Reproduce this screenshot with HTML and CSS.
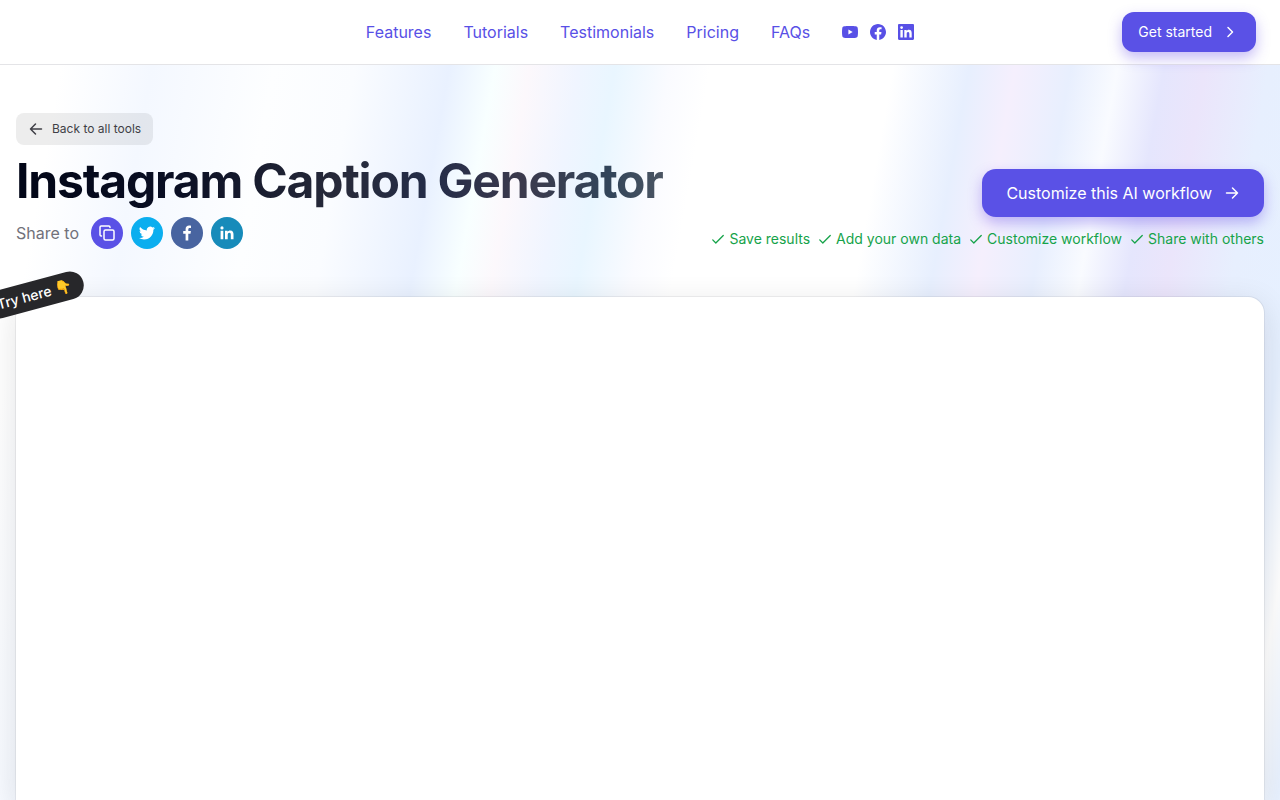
FILE: index.html
```
<!DOCTYPE html>
<html lang="en">
<head>
  <meta charset="utf-8">
  <meta name="viewport" content="width=device-width, initial-scale=1">
  <title>Instagram Caption Generator</title>
  <link rel="stylesheet" href="styles.css">
</head>
<body>

<header class="navbar">
  <nav class="nav-links">
    <a href="#features">Features</a>
    <a href="#tutorials">Tutorials</a>
    <a href="#testimonials">Testimonials</a>
    <a href="#pricing">Pricing</a>
    <a href="#faqs">FAQs</a>
    <div class="socials">
      <a href="#youtube" aria-label="YouTube">
        <svg viewBox="0 0 16 16" fill="currentColor"><path fill-rule="evenodd" d="M8 2c2.500 0 4.700.1 5.900.3.900.1 1.600.8 1.800 1.700.4 2.400.4 5.600 0 8-.2.900-.9 1.600-1.800 1.700-2.300.4-9.500.4-11.800 0C1.200 13.600.5 12.900.3 12c-.4-2.400-.4-5.600 0-8 .2-.9.900-1.600 1.800-1.700C3.300 2.100 5.500 2 8 2zM6.400 5.500v5L10.700 8z"/></svg>
      </a>
      <a href="#facebook" aria-label="Facebook">
        <svg viewBox="0 0 16 16" fill="currentColor"><path d="M16 8.050C16 3.600 12.400 0 8 0S0 3.600 0 8.050c0 4.020 2.930 7.350 6.750 7.950v-5.620H4.720V8.050h2.030V6.280c0-2.020 1.200-3.130 3.020-3.130.88 0 1.800.16 1.800.16v1.980h-1.010c-1 0-1.310.62-1.310 1.260v1.500h2.220l-.35 2.330H9.250V16C13.070 15.400 16 12.070 16 8.050z"/></svg>
      </a>
      <a href="#linkedin" aria-label="LinkedIn">
        <svg viewBox="0 0 16 16" fill="currentColor"><path fill-rule="evenodd" d="M1.150 0h13.700C15.490 0 16 .5 16 1.130v13.740c0 .63-.51 1.130-1.150 1.130H1.150C.51 16 0 15.500 0 14.870V1.130C0 .5.51 0 1.150 0zM2.400 6v7.600h2.400V6zM3.600 2.200a1.400 1.400 0 1 0 0 2.800 1.400 1.400 0 0 0 0-2.800zM6.300 6v7.600h2.400V9.850c0-1 .2-1.950 1.400-1.950s1.250 1.120 1.250 2.010v3.690h2.350V9.420c0-2.040-.44-3.610-2.820-3.610-1.150 0-1.910.63-2.230 1.220h-.03V6z"/></svg>
      </a>
    </div>
  </nav>
  <a class="btn btn-small" href="#start">
    Get started
    <svg viewBox="0 0 16 16" class="line-icon"><path d="M6 3.500 10.500 8 6 12.500"/></svg>
  </a>
</header>

<main class="page">
  <section class="hero">
    <div class="intro">
      <a class="back" href="#tools">
        <svg viewBox="0 0 16 16" class="line-icon"><path d="M13.500 8h-11M7.500 3 2.500 8l5 5"/></svg>
        Back to all tools
      </a>
      <h1>Instagram Caption Generator</h1>
      <div class="share">
        <span>Share to</span>
        <button class="share-btn copy" aria-label="Copy link">
          <svg viewBox="0 0 16 16" class="line-icon"><rect x="5" y="5" width="10" height="10" rx="1.500"/><path d="M11 2.500V2.200A1.200 1.200 0 0 0 9.800 1H2.200A1.200 1.200 0 0 0 1 2.200v7.600A1.200 1.200 0 0 0 2.200 11h.3"/></svg>
        </button>
        <button class="share-btn twitter" aria-label="Share on Twitter">
          <svg viewBox="0 0 24 24" fill="currentColor"><path d="M23.950 4.570a10 10 0 0 1-2.820.77 4.960 4.960 0 0 0 2.160-2.720c-.95.55-2 .95-3.130 1.180a4.920 4.920 0 0 0-8.380 4.480C7.690 8.100 4.070 6.130 1.640 3.160a4.920 4.920 0 0 0 1.520 6.570 4.900 4.900 0 0 1-2.230-.61v.06a4.920 4.920 0 0 0 3.950 4.830 5 5 0 0 1-2.210.08 4.940 4.940 0 0 0 4.600 3.420A9.870 9.870 0 0 1 0 19.540a14 14 0 0 0 7.550 2.210c9.050 0 14-7.500 14-13.980 0-.21 0-.42-.02-.63a9.900 9.900 0 0 0 2.460-2.550z"/></svg>
        </button>
        <button class="share-btn facebook" aria-label="Share on Facebook">
          <svg viewBox="0 0 16 16" fill="currentColor"><path d="M9.300 15.500V8.700h2.200l.4-2.600H9.300V4.500c0-.8.400-1.400 1.500-1.400H12V.8C11.600.700 10.900.600 10.100.600 8 .6 6.600 1.900 6.600 4.100v2H4.200v2.600h2.400v6.800z"/></svg>
        </button>
        <button class="share-btn linkedin" aria-label="Share on LinkedIn">
          <svg viewBox="0 0 16 16" fill="currentColor"><circle cx="3" cy="2.900" r="1.600"/><path d="M1.600 5.700h2.700v8.500H1.600zM6 5.700h2.600v1.200c.4-.8 1.300-1.400 2.600-1.400 2.700 0 3.300 1.700 3.300 4.100v4.600h-2.700v-4.100c0-1 0-2.300-1.400-2.300s-1.700 1.100-1.700 2.200v4.200H6z"/></svg>
        </button>
      </div>
    </div>

    <div class="actions">
      <a class="btn btn-large" href="#customize">
        Customize this AI workflow
        <svg viewBox="0 0 16 16" class="line-icon"><path d="M2.500 8h11M8.500 3l5 5-5 5"/></svg>
      </a>
      <ul class="perks">
        <li><svg viewBox="0 0 16 16" class="line-icon"><path d="m2 9 3.500 3.500L14 4"/></svg>Save results</li>
        <li><svg viewBox="0 0 16 16" class="line-icon"><path d="m2 9 3.500 3.500L14 4"/></svg>Add your own data</li>
        <li><svg viewBox="0 0 16 16" class="line-icon"><path d="m2 9 3.500 3.500L14 4"/></svg>Customize workflow</li>
        <li><svg viewBox="0 0 16 16" class="line-icon"><path d="m2 9 3.500 3.500L14 4"/></svg>Share with others</li>
      </ul>
    </div>
  </section>

  <section class="tool">
    <div class="try">Try here 👇</div>
  </section>
</main>

</body>
</html>
```

FILE: styles.css
```
* { box-sizing: border-box; }

body {
  display: flex;
  flex-direction: column;
  min-height: 100vh;
  margin: 0;
  font-family: Inter, "Noto Sans", sans-serif;
  font-size: 16px;
  line-height: 24px;
  color: #27272a;
  background: #fff;
  overflow-x: hidden;
}

a { color: inherit; text-decoration: none; }
svg { display: block; width: 16px; height: 16px; flex: none; }

.line-icon {
  fill: none;
  stroke: currentColor;
  stroke-width: 1.5;
  stroke-linecap: round;
  stroke-linejoin: round;
}

/* top bar */
.navbar {
  position: relative;
  z-index: 1;
  display: grid;
  grid-template-columns: 1fr auto 1fr;
  align-items: center;
  height: 65px;
  padding: 0 24px;
  border-bottom: 1px solid #e4e4e7;
}
.nav-links {
  grid-column: 2;
  display: flex;
  align-items: center;
  gap: 32px;
  color: #5850e6;
}
.socials { display: flex; gap: 12px; }

.btn {
  display: flex;
  align-items: center;
  justify-self: end;
  color: #fff;
  background: #5a51e6;
  border-radius: 12px;
  box-shadow: 0 6px 14px rgba(90, 60, 230, 0.35);
}
.btn-small { height: 40px; padding: 0 18px 0 16px; gap: 10px; font-size: 14px; }
.btn-large { height: 48px; padding: 0 24px; gap: 12px; border-radius: 14px; }

/* slanted pastel streaks behind the hero */
.page {
  flex: 1;
  display: flex;
  flex-direction: column;
  padding: 48px 16px 0;
  background: repeating-linear-gradient(100deg,
    #fff 0, #fff 60px, #f4f8ff 150px, #fdfeff 270px, #fafcff 350px,
    #e9f1ff 443px, #f8ffff 488px, #fcf8fc 522px, #f0f5ff 570px,
    #e9f6ff 606px, #fafbff 660px, #fff 700px, #fff 880px,
    #e7effe 955px, #f5effd 1000px, #e8effe 1055px, #f9fbff 1101px,
    #e5e6fd 1147px, #ebe5fb 1187px, #e7effe 1250px, #e6f0ff 1311px,
    #fff 1350px, #e8f1ff 1385px, #fff 1440px);
}

.hero {
  display: flex;
  justify-content: space-between;
  align-items: flex-end;
}

.back {
  display: inline-flex;
  align-items: center;
  gap: 8px;
  height: 32px;
  padding: 0 12px;
  font-size: 12px;
  color: #3f3f46;
  border-radius: 8px;
  background: rgba(24, 24, 27, 0.08);
}

h1 {
  margin: 12px 0 0;
  padding-bottom: 12px;
  width: fit-content;
  font-size: 48px;
  line-height: 48px;
  font-weight: 700;
  letter-spacing: -0.025em;
  color: transparent;
  background: linear-gradient(90deg, #020617, #0a0f24 25%, #272a3a 50%, #232c48 64%, #3b394c 78%, #32455a 92%, #4b5563);
  -webkit-background-clip: text;
  background-clip: text;
}

.share { display: flex; align-items: center; gap: 8px; color: #71717a; }
.share span { margin-right: 4px; }
.share-btn {
  display: flex;
  align-items: center;
  justify-content: center;
  width: 32px;
  height: 32px;
  padding: 0;
  border: 0;
  border-radius: 50%;
  color: #fff;
  cursor: pointer;
}
.copy { background: #5a51e6; }
.twitter { background: #0baeef; }
.facebook { background: #4864a0; }
.linkedin { background: #178bba; }

.actions { display: flex; flex-direction: column; align-items: flex-end; gap: 12px; }
.perks {
  display: flex;
  gap: 8px;
  margin: 0;
  padding: 0;
  list-style: none;
  font-size: 14px;
  line-height: 20px;
  color: #16a34a;
}
.perks li { display: flex; align-items: center; gap: 4px; }
.perks svg { width: 14px; height: 14px; }

/* tool panel */
.tool {
  position: relative;
  flex: 1;
  min-height: 480px;
  margin-top: 48px;
  background: #fff;
  border-radius: 16px 16px 0 0;
  box-shadow: 0 0 0 1px rgba(24, 24, 27, 0.06), 0 8px 32px rgba(24, 24, 27, 0.12);
}
.try {
  position: absolute;
  top: -16px;
  left: -32px;
  padding: 2px 12px;
  color: #fff;
  background: #27272a;
  border-radius: 14px;
  font-size: 14px;
  font-weight: 500;
  white-space: nowrap;
  transform: rotate(-15deg);
}
```
